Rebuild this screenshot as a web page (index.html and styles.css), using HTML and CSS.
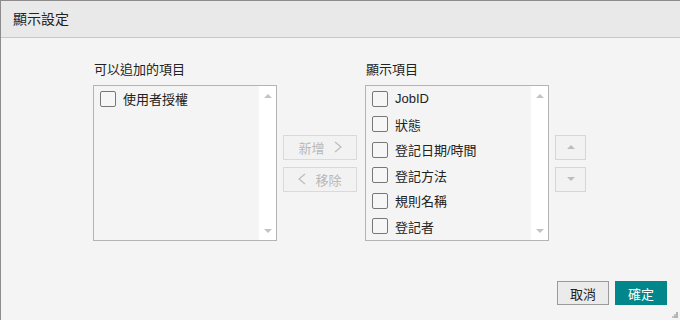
FILE: index.html
```html
<!DOCTYPE html>
<html lang="zh-Hant">
<head>
    <meta charset="UTF-8">
    <meta name="viewport" content="width=device-width, initial-scale=1.0">
    <title>顯示設定</title>
    <link rel="stylesheet" href="styles.css">
</head>
<body>
    <div class="dialog">
        <div class="dialog-header">顯示設定</div>

        <div class="dialog-body">
            <div class="column">
                <div class="column-label">可以追加的項目</div>
                <div class="listbox">
                    <ul class="items">
                        <li class="item"><span class="check"></span>使用者授權</li>
                    </ul>
                    <div class="scrollbar">
                        <span class="arrow arrow-up"></span>
                        <span class="arrow arrow-down"></span>
                    </div>
                </div>
            </div>

            <div class="transfer">
                <button class="btn-side" disabled>新增
                    <svg class="chev" width="8" height="12" viewBox="0 0 8 12"><polyline points="1,1 7,6 1,11" fill="none" stroke="#bcbcbc" stroke-width="1.2"/></svg>
                </button>
                <button class="btn-side" disabled>
                    <svg class="chev" width="8" height="12" viewBox="0 0 8 12"><polyline points="7,1 1,6 7,11" fill="none" stroke="#bcbcbc" stroke-width="1.2"/></svg>
                    移除</button>
            </div>

            <div class="column column-right">
                <div class="column-label">顯示項目</div>
                <div class="listbox">
                    <ul class="items">
                        <li class="item"><span class="check"></span>JobID</li>
                        <li class="item"><span class="check"></span>狀態</li>
                        <li class="item"><span class="check"></span>登記日期/時間</li>
                        <li class="item"><span class="check"></span>登記方法</li>
                        <li class="item"><span class="check"></span>規則名稱</li>
                        <li class="item"><span class="check"></span>登記者</li>
                    </ul>
                    <div class="scrollbar">
                        <span class="arrow arrow-up"></span>
                        <span class="arrow arrow-down"></span>
                    </div>
                </div>
            </div>

            <div class="order">
                <button class="btn-order" disabled><span class="arrow arrow-up"></span></button>
                <button class="btn-order" disabled><span class="arrow arrow-down"></span></button>
            </div>
        </div>

        <div class="dialog-footer">
            <button class="btn btn-cancel">取消</button>
            <button class="btn btn-ok">確定</button>
        </div>

        <svg class="grip" width="6" height="6" viewBox="0 0 6 6">
            <rect x="4" y="0" width="2" height="2" fill="#b4b4b4"/>
            <rect x="2" y="2" width="2" height="2" fill="#c4c4c4"/>
            <rect x="4" y="2" width="2" height="2" fill="#b4b4b4"/>
            <rect x="0" y="4" width="2" height="2" fill="#c4c4c4"/>
            <rect x="2" y="4" width="2" height="2" fill="#b4b4b4"/>
            <rect x="4" y="4" width="2" height="2" fill="#b4b4b4"/>
        </svg>
    </div>
</body>
</html>
```

FILE: styles.css
```css
/* Page */
body {
    margin: 0;
    font-family: "Liberation Sans", "Noto Sans CJK TC", sans-serif;
    font-size: 13px;
    color: #222;
    background: #f4f4f4;
}

/* Dialog frame */
.dialog {
    position: relative;
    width: 680px;
    height: 320px;
    box-sizing: border-box;
    border-top: 1px solid #8c8c8c;
    border-left: 1px solid #8c8c8c;
    background: #f4f4f4;
    display: flex;
    flex-direction: column;
}

.dialog-header {
    height: 36px;
    line-height: 36px;
    padding-left: 12px;
    font-size: 14px;
    background: #e9e9e9;
    border-bottom: 1px solid #c8c8c8;
}

/* Two lists with buttons */
.dialog-body {
    display: flex;
    align-items: flex-end;
    padding: 24px 0 0 92px;
}

.column {
    width: 184px;
}

.column-right {
    margin-left: 8px;
}

.column-label {
    height: 16px;
    line-height: 16px;
    margin-bottom: 7px;
    padding-left: 1px;
}

.listbox {
    display: flex;
    height: 156px;
    box-sizing: border-box;
    border: 1px solid #b4b4b4;
    background: #f4f4f4;
}

.items {
    flex: 1;
    list-style: none;
    margin: 0;
    padding: 0;
}

.item {
    display: flex;
    align-items: center;
    height: 25.5px;
    padding-left: 6px;
}

.check {
    width: 14px;
    height: 14px;
    margin-right: 7px;
    border: 1px solid #777;
    border-radius: 2px;
    background: #f6f6f6;
}

.scrollbar {
    width: 17px;
    background: #fff;
    display: flex;
    flex-direction: column;
    justify-content: space-between;
    align-items: center;
    padding: 8px 0 7px;
}

/* Small triangles */
.arrow {
    width: 0;
    height: 0;
    border-left: 4px solid transparent;
    border-right: 4px solid transparent;
}

.arrow-up {
    border-bottom: 4px solid #c4c4c4;
}

.arrow-down {
    border-top: 4px solid #c4c4c4;
}

/* Add / remove */
.transfer,
.order {
    height: 156px;
    display: flex;
    flex-direction: column;
    justify-content: center;
    gap: 7px;
    margin-left: 6px;
}

.btn-side {
    width: 74px;
    height: 25px;
    display: flex;
    align-items: center;
    justify-content: center;
    gap: 9px;
    padding: 0;
    font-family: inherit;
    font-size: 13px;
    color: #b8b8b8;
    background: #f2f2f2;
    border: 1px solid #dadada;
}

.btn-order {
    width: 31px;
    height: 25px;
    display: flex;
    align-items: center;
    justify-content: center;
    padding: 0;
    background: #f2f2f2;
    border: 1px solid #d6d6d6;
}

.btn-order .arrow-up {
    border-bottom-color: #bdbdbd;
}

.btn-order .arrow-down {
    border-top-color: #bdbdbd;
}

/* Footer */
.dialog-footer {
    margin-top: auto;
    display: flex;
    justify-content: flex-end;
    gap: 6px;
    padding: 0 13px 15px 0;
}

.btn {
    width: 52px;
    height: 24px;
    padding: 0;
    font-family: inherit;
    font-size: 13px;
}

.btn-cancel {
    color: #222;
    background: #ebebeb;
    border: 1px solid #9a9a9a;
}

.btn-ok {
    color: #fff;
    background: #00868b;
    border: 1px solid #00868b;
}

.grip {
    position: absolute;
    right: 2px;
    bottom: 2px;
}
```
